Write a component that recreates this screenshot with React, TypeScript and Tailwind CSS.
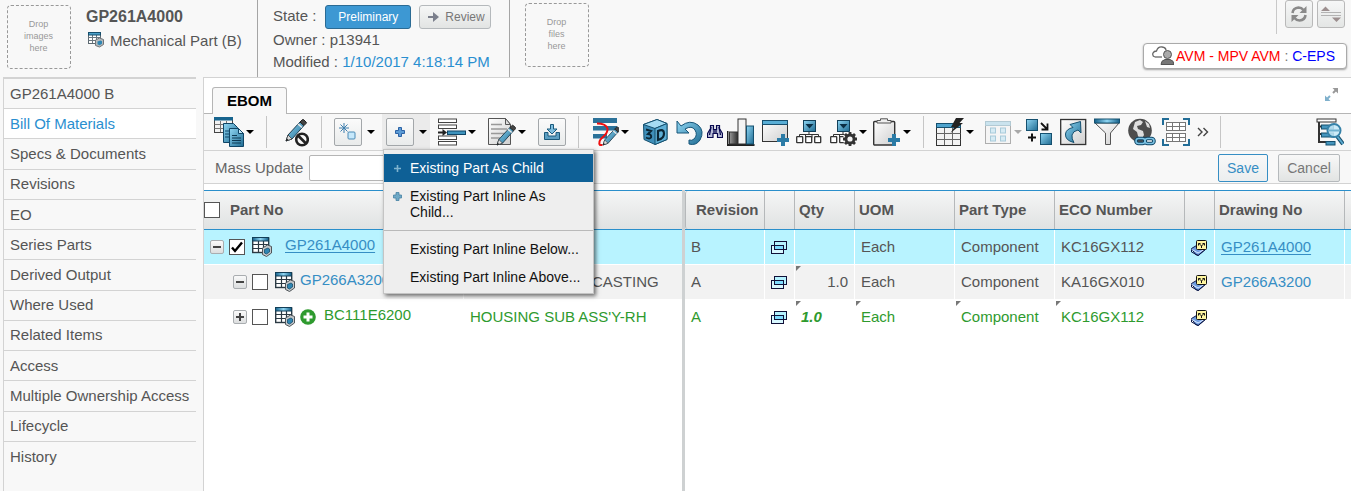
import React from 'react';
import type { ReactNode } from 'react';

const NAV = [
  'GP261A4000 B',
  'Bill Of Materials',
  'Specs & Documents',
  'Revisions',
  'EO',
  'Series Parts',
  'Derived Output',
  'Where Used',
  'Related Items',
  'Access',
  'Multiple Ownership Access',
  'Lifecycle',
  'History',
];

function Defs() {
  return (
    <svg className="absolute h-0 w-0" aria-hidden="true">
      <defs>
        <linearGradient id="blue" x1="0" y1="0" x2="1" y2="1">
          <stop offset="0" stopColor="#8fd6f3" />
          <stop offset="1" stopColor="#1f6b92" />
        </linearGradient>
        <linearGradient id="blueH" x1="0" y1="0" x2="1" y2="0">
          <stop offset="0" stopColor="#15608a" />
          <stop offset="0.5" stopColor="#8fd6f3" />
          <stop offset="1" stopColor="#15608a" />
        </linearGradient>
        <linearGradient id="paper" x1="0" y1="0" x2="1" y2="1">
          <stop offset="0" stopColor="#ffffff" />
          <stop offset="1" stopColor="#cfcfcf" />
        </linearGradient>
        <linearGradient id="dark" x1="0" y1="0" x2="1" y2="0">
          <stop offset="0" stopColor="#999999" />
          <stop offset="1" stopColor="#333333" />
        </linearGradient>
      </defs>
    </svg>
  );
}

function Art({ size = 28, children }: { size?: number; children: ReactNode }) {
  return (
    <svg width={size} height={size} viewBox={`0 0 ${size} ${size}`} fill="none" className="shrink-0" aria-hidden="true">
      {children}
    </svg>
  );
}

function Caret({ muted = false }: { muted?: boolean }) {
  return (
    <svg width="8" height="4" viewBox="0 0 8 4" className="shrink-0" aria-hidden="true">
      <path d="M0 0h8L4 4z" fill={muted ? '#a8a8a8' : '#000'} />
    </svg>
  );
}

function Tool({ label, menu, muted, children }: { label: string; menu?: boolean; muted?: boolean; children: ReactNode }) {
  return (
    <button type="button" aria-label={label} className="flex shrink-0 items-center">
      {children}
      {menu && (
        <span className="flex w-[10px] justify-end">
          <Caret muted={muted} />
        </span>
      )}
    </button>
  );
}

function Boxed({ children }: { children: ReactNode }) {
  return (
    <span className="flex size-7 shrink-0 items-center justify-center rounded-[2px] border border-[#a3a7aa] bg-linear-to-b from-[#fbfbfb] to-[#e9ebeb]">
      {children}
    </span>
  );
}

function Separator() {
  return <span className="mx-3 h-8 w-px shrink-0 bg-[#c6c6c6]" />;
}

function Tree() {
  return (
    <>
      <path d="M14 13.500v3M4.500 19.500v-3h19v3M10.500 19.500v-3M17 19.500v-3" stroke="#333" />
      <rect x="8.500" y="2.500" width="12" height="11" fill="url(#blue)" stroke="#123f58" />
      <path d="M10.500 6h8l-4 4.500z" fill="#0b2f45" />
      <rect x="1.700" y="18.700" width="6" height="6" rx="0.500" fill="#fff" stroke="#333" strokeWidth="1.300" />
      <rect x="10.700" y="18.700" width="6" height="6" rx="0.500" fill="#fff" stroke="#333" strokeWidth="1.300" />
      <rect x="19.700" y="18.700" width="6" height="6" rx="0.500" fill="#fff" stroke="#333" strokeWidth="1.300" />
    </>
  );
}

function Pencil() {
  return (
    <>
      <path d="M0 0l2-6L14-19l4 3.500L6-2z" fill="url(#blue)" stroke="#1f3c4d" />
      <path d="M14-19l2-2q1-1 2 0l2 2q1 1 0 1.500l-2 2z" fill="#444" stroke="#222" />
      <path d="M12-17l4 3.500" stroke="#e8e8e8" strokeWidth="1.500" />
      <path d="M0 0l2-6 4 4z" fill="#ddd" stroke="#333" strokeWidth="0.700" />
      <path d="M0 0l.8-2.500 1.600 1.600z" fill="#111" />
    </>
  );
}

function ExistingPartMenu() {
  return (
    <div
      role="menu"
      className="absolute top-[35px] left-px z-10 w-[211px] border border-[#c4c4c4] bg-[#eee] pt-1 pb-0.5 text-[14px] leading-4 text-[#111] shadow-[2px_2px_4px_rgba(0,0,0,0.55)]"
    >
      <button type="button" role="menuitem" className="flex w-full items-start bg-[#0e6096] py-1.5 text-left text-white">
        <span className="flex h-4 w-[26px] shrink-0 items-center justify-center">
          <svg width="9" height="9" viewBox="0 0 9 9" aria-hidden="true">
            <path d="M4.500 1v7M1 4.500h7" stroke="#7fb3cf" strokeWidth="1.600" />
          </svg>
        </span>
        Existing Part As Child
      </button>
      <button type="button" role="menuitem" className="flex w-full items-start py-1.5 pr-7 text-left">
        <span className="flex h-4 w-[26px] shrink-0 items-center justify-center">
          <svg width="9" height="9" viewBox="0 0 9 9" aria-hidden="true">
            <path d="M3 .5h3V3h2.500v3H6v2.500H3V6H.5V3H3z" fill="#6fa9c6" stroke="#4682a3" strokeWidth="0.800" />
          </svg>
        </span>
        Existing Part Inline As Child...
      </button>
      <div className="my-1 h-px bg-[#b9b9b9]" />
      <button type="button" role="menuitem" className="block w-full py-1.5 pl-[26px] text-left whitespace-nowrap">
        Existing Part Inline Below...
      </button>
      <button type="button" role="menuitem" className="block w-full py-1.5 pl-[26px] text-left whitespace-nowrap">
        Existing Part Inline Above...
      </button>
    </div>
  );
}

function Toolbar() {
  return (
    <div className="flex h-[37px] items-center border-b border-[#d3d3d3] bg-[#f8f8f8] pl-[10px]">
      <Tool label="Part lists" menu>
        <Art size={30}>
          <rect x=".5" y="1" width="18" height="14.500" fill="#f2f2f2" stroke="#444" />
          <path d="M.5 7.500h18M.5 11.500h18M6.500 4v11M12.500 4v11" stroke="#777" />
          <rect x="0" y="0" width="19" height="3.500" fill="#17648e" />
          <path d="M9.500 6.500h10l4 4v15h-14z" fill="url(#blue)" stroke="#0f4566" />
          <path d="M11 14h4M11 17h4M11 20h4" stroke="#0f4566" />
          <path d="M15.500 11.500h9l5 5v13h-14z" fill="url(#blue)" stroke="#0f4566" />
          <path d="M24.500 11.500v5h5z" fill="#bfe6f7" stroke="#0f4566" />
          <path d="M18 18.500h5M18 21h9M18 23.500h9M18 26h9" stroke="#0d3a55" />
        </Art>
      </Tool>
      <Separator />
      <Tool label="Disable editing">
        <Art size={30}>
          <g transform="translate(7 24)">
            <Pencil />
          </g>
          <circle cx="23" cy="22.500" r="5.800" fill="#f8f8f8" stroke="#222" strokeWidth="2.600" />
          <path d="M19 18.500l8 8" stroke="#222" strokeWidth="2.600" />
        </Art>
      </Tool>
      <Separator />
      <button type="button" aria-label="Create new part" className="flex w-12 shrink-0 items-center gap-[5px]">
        <Boxed>
          <Art size={18}>
            <path d="M5 0v10M0 5h10M1.500 1.500l7 7M8.500 1.500l-7 7" stroke="#3f7fae" />
            <rect x="9" y="9" width="7" height="7" rx="1" fill="#c6e8fb" stroke="#4b8ab5" />
          </Art>
        </Boxed>
        <Caret />
      </button>
      <div className="relative h-9 w-12 shrink-0 bg-[#ebebeb]">
        <button type="button" aria-label="Add existing" aria-expanded="true" className="flex h-9 items-center gap-[5px] pl-1">
          <Boxed>
            <Art size={10}>
              <path d="M3.500.5h3v3h3v3h-3v3h-3v-3h-3v-3h3z" fill="#5b9bd5" stroke="#2d62a5" />
            </Art>
          </Boxed>
          <Caret />
        </button>
        <ExistingPartMenu />
      </div>
      <div className="ml-2 flex items-center gap-3">
        <Tool label="Insert row" menu>
          <Art>
            <g fill="#fff" stroke="#444">
              <rect x=".5" y="1" width="18" height="3.500" />
              <rect x=".5" y="7" width="18" height="3.500" />
              <rect x=".5" y="18" width="18" height="3.500" />
              <rect x=".5" y="23.500" width="18" height="3.500" />
            </g>
            <path d="M0 14.500h6" stroke="#222" strokeWidth="2" />
            <path d="M4.500 11l4.500 3.500-4.500 3.500z" fill="#222" />
            <rect x="9.500" y="13" width="18" height="3.500" fill="#3e93bd" stroke="#0f4566" />
          </Art>
        </Tool>
        <Tool label="Edit document" menu>
          <Art>
            <path d="M.5.500h17l5 6v20H.500z" fill="url(#paper)" stroke="#555" />
            <path d="M17.500.5v6h5z" fill="#ddd" stroke="#555" />
            <path d="M3 6.500h11M3 11h16M3 15.500h14M3 20h9" stroke="#999" strokeWidth="1.600" />
            <g transform="translate(9 27) scale(.92)">
              <Pencil />
            </g>
          </Art>
        </Tool>
        <button type="button" aria-label="Import">
          <Boxed>
            <Art size={18}>
              <path d="M1.500 9.500h3.500V13h8V9.500h3.500v7h-15z" fill="#5c9fc2" stroke="#1b5a7c" />
              <path d="M7.500 1.500h3V6H14l-5 5-5-5h3.500z" fill="#7fbfe0" stroke="#1b5a7c" />
            </Art>
          </Boxed>
        </button>
      </div>
      <Separator />
      <Tool label="Markup" menu>
        <Art>
          <g fill="#2c7299">
            <rect x="2" y="0" width="24" height="5" />
            <rect x="2" y="8" width="24" height="4.500" />
            <rect x="2" y="16" width="14" height="4.500" />
          </g>
          <path d="M6 5.500q9 0 10.500 5 .5 4-4 8t-4 6q-1 3 3 2.500" stroke="#f01010" strokeWidth="2" />
          <g transform="translate(12 27) scale(.84)">
            <Pencil />
          </g>
        </Art>
      </Tool>
      <div className="ml-3 flex items-center gap-1.5">
        <Tool label="3D view">
          <Art>
            <path d="M2.500 6.500L16 1.500l10 4v16L14 26.500 3 21.500z" fill="#3f8fb9" stroke="#15506f" />
            <path d="M2.500 6.500L16 1.500l10 4-12 5z" fill="#a5dcf3" stroke="#15506f" />
            <path d="M14 10.500l12-5v16l-12 5z" fill="#5fb0d6" stroke="#15506f" />
            <path d="M5 11.500l5 1.500-3 3q4 .5 3 3.500-1.500 2-5 0" stroke="#0b2635" strokeWidth="2" />
            <path d="M17 13v9q6-1.500 6-6.500T17 13z" stroke="#0b2635" strokeWidth="2.200" />
          </Art>
        </Tool>
        <Tool label="Undo">
          <Art>
            <path d="M2 3v12h12l-4-4q7-4 10 1t-1 9q-2 2-5 1v4q7 2 11-4 5-9-2-15-8-6-17 1z" fill="url(#blue)" stroke="#175578" strokeLinejoin="round" />
          </Art>
        </Tool>
        <button type="button" aria-label="Find" className="flex w-3 shrink-0 justify-center">
          <Art size={16}>
            <path d="M3.500 1.500h3v4h3v-4h3v3l3 5v4h-5v-4h-4.500v4h-5.500v-4l3-5z" fill="#b9bdd8" stroke="#0a0a50" strokeWidth="1.200" />
            <path d="M4 3l-1.500 8M7 5v5M9 5v5M12 3l1.500 8" stroke="#0a0a50" strokeWidth="1.300" />
          </Art>
        </button>
        <Tool label="Chart">
          <Art>
            <path d="M.5 13v14h27" stroke="#222" strokeWidth="2" />
            <rect x="2.500" y="14" width="8" height="12" fill="url(#dark)" stroke="#333" />
            <rect x="11" y="1" width="8" height="25" fill="#f4f4f4" stroke="#333" />
            <rect x="19.500" y="8" width="7" height="18" fill="url(#blue)" stroke="#15506f" />
          </Art>
        </Tool>
        <Tool label="Add window">
          <Art>
            <rect x="1.500" y="2.500" width="25" height="21" fill="url(#paper)" stroke="#333" />
            <rect x="1.500" y="2.500" width="25" height="4" fill="#59aed6" stroke="#174e6c" />
            <path d="M20 16h4v4h4v4h-4v4h-4v-4h-4v-4h4z" fill="#2b7ba6" />
          </Art>
        </Tool>
        <Tool label="Structure">
          <Art>
            <Tree />
          </Art>
        </Tool>
        <Tool label="Structure settings" menu>
          <Art>
            <Tree />
            <circle cx="21" cy="21" r="7.200" fill="#f8f8f8" />
            <circle cx="21" cy="21" r="5.500" fill="#333" />
            <path d="M21 14v14M14 21h14M16 16l10 10M26 16L16 26" stroke="#333" strokeWidth="2.800" />
            <circle cx="21" cy="21" r="2.600" fill="#f4f4f4" />
          </Art>
        </Tool>
        <Tool label="Paste" menu>
          <Art>
            <rect x=".7" y="3.500" width="21" height="23.500" rx="1" fill="url(#paper)" stroke="#333" strokeWidth="1.400" />
            <path d="M4 5V2.500h3.500V.8h7v1.700H18V5z" fill="#eee" stroke="#555" />
            <path d="M19 16h4v4h4v4h-4v4h-4v-4h-4v-4h4z" fill="#2b7ba6" />
          </Art>
        </Tool>
      </div>
      <Separator />
      <div className="flex items-center gap-[10px]">
        <Tool label="Table actions" menu>
          <Art>
            <rect x=".5" y="6.500" width="24" height="21" fill="#f3f3f3" stroke="#333" />
            <path d="M.5 15.500h24M.5 21.500h24M8.500 10v17M16.500 10v17" stroke="#666" />
            <rect x=".5" y="5.500" width="24" height="4" fill="#4ea3cd" stroke="#15506f" />
            <path d="M20 0h8l-4.500 5H27L14.500 15l4-6H15z" fill="#222" />
          </Art>
        </Tool>
        <Tool label="Views" menu muted>
          <Art>
            <g opacity="0.500">
              <rect x="1.500" y="3.500" width="25" height="22" fill="#f3f3f3" stroke="#666" />
              <rect x="1.500" y="3.500" width="25" height="4" fill="#9dd0e6" stroke="#6f9db1" />
              <g fill="#b5dff1" stroke="#5b9ebc">
                <rect x="6.500" y="10" width="5" height="5" />
                <rect x="16.500" y="10" width="5" height="5" />
                <rect x="6.500" y="18" width="5" height="5" />
                <rect x="16.500" y="18" width="5" height="5" />
              </g>
            </g>
          </Art>
        </Tool>
      </div>
      <div className="ml-1 flex items-center gap-1.5">
        <Tool label="Replace">
          <Art>
            <rect x=".5" y="1.500" width="11" height="11" fill="url(#blue)" stroke="#15506f" />
            <rect x="14.500" y="15.500" width="11" height="11" fill="url(#blue)" stroke="#15506f" />
            <path d="M15 5l6 6M21.500 5.500v6h-6" stroke="#111" strokeWidth="1.800" />
            <path d="M6 15.500v8M2 19.500h8" stroke="#111" strokeWidth="2" />
          </Art>
        </Tool>
        <Tool label="Open link">
          <Art>
            <rect x=".7" y="1.500" width="25" height="25" fill="url(#paper)" stroke="#333" strokeWidth="1.300" />
            <path d="M14 24.500q-9-2-8.500-8.500.5-5 7.500-6.500L10 6.500 20.500 3.500 21 15l-3-3q-5 1-6 5-.5 4 2 7.500z" fill="url(#blue)" stroke="#15506f" />
          </Art>
        </Tool>
        <Tool label="Filter">
          <Art>
            <path d="M1 5h24L16.500 15v11.500h-5V15z" fill="url(#paper)" stroke="#555" />
            <rect x=".5" y="1" width="25" height="4" fill="url(#blueH)" stroke="#15506f" />
          </Art>
        </Tool>
        <Tool label="Web link">
          <Art>
            <circle cx="12" cy="12.500" r="11.800" fill="#4d4d4d" />
            <path d="M7 4l5-2 3 2-2 3-4 1 1 3 5 2 1 4-3 5-3-4-1-4-4-3zM17 3l4 3 1 4-3-1z" fill="#ddd" />
            <g stroke="#0f4566" strokeWidth="3.600">
              <rect x="8" y="20.500" width="9" height="5" rx="2.500" />
              <rect x="17" y="20.500" width="9" height="5" rx="2.500" />
            </g>
            <g stroke="#7cc3e4" strokeWidth="1.500">
              <rect x="8" y="20.500" width="9" height="5" rx="2.500" />
              <rect x="17" y="20.500" width="9" height="5" rx="2.500" />
            </g>
          </Art>
        </Tool>
        <Tool label="Fit table">
          <Art>
            <path d="M1 7V1h6M21 1h6v6M27 21v6h-6M7 27H1v-6" stroke="#226d97" strokeWidth="2" />
            <g fill="#fff" stroke="#777">
              <rect x="4.500" y="4.500" width="19" height="8" />
              <rect x="4.500" y="15.500" width="19" height="8" />
              <path d="M4.500 8.500h19M4.500 19.500h19M10.500 4.500v8M17.500 4.500v8M10.500 15.500v8M17.500 15.500v8" />
            </g>
          </Art>
        </Tool>
        <Tool label="More tools">
          <svg width="14" height="12" viewBox="0 0 14 12" fill="none" aria-hidden="true">
            <path d="M2 2l4 4-4 4M7.500 2l4 4-4 4" stroke="#444" strokeWidth="1.400" />
          </svg>
        </Tool>
      </div>
      <span className="ml-[10px] h-8 w-px shrink-0 bg-[#c6c6c6]" />
      <div className="mr-[7px] ml-auto">
        <Tool label="Search in structure">
          <Art>
            <path d="M3 4v20h7M3 8.500h4M3 16h4" stroke="#333" strokeWidth="2" />
            <rect x="1" y="1" width="19" height="3" fill="#fff" stroke="#333" />
            <rect x="5.500" y="7" width="12" height="4" fill="#4595bd" stroke="#15506f" />
            <rect x="5.500" y="15" width="12" height="4" fill="#4595bd" stroke="#15506f" />
            <rect x="10" y="23.500" width="9" height="3.500" fill="#4595bd" stroke="#15506f" />
            <path d="M21 18l6 8" stroke="#174e6c" strokeWidth="4" />
            <path d="M21 18l6 8" stroke="#5aa9ce" strokeWidth="2" />
            <circle cx="18" cy="12.500" r="6.500" fill="#c5e9f8" fillOpacity="0.850" stroke="#3682a9" strokeWidth="2" />
            <path d="M13 12.500h10" stroke="#6fb0cf" strokeWidth="2" />
          </Art>
        </Tool>
      </div>
    </div>
  );
}

function PartIcon() {
  return (
    <Art size={20}>
      <rect x=".7" y="1" width="16" height="14.500" fill="#fff" stroke="#2c3a44" strokeWidth="1.400" />
      <path d="M.5 7.500h16M.5 11.500h16M6.500 4v11.500M11.500 4v11.500" stroke="#2c3a44" strokeWidth="1.200" />
      <rect x=".5" y=".5" width="16" height="3.500" fill="url(#blueH)" stroke="#123f58" />
      <path d="M10.500 11l5-3 4 1.500v6.500l-5 3.500-4-2z" fill="#c4c8cb" stroke="#4f5559" />
      <path d="M12.500 12.500l3.500-1.500 1.500 1v3l-3 2-2-1z" fill="#2f86b3" stroke="#174e6c" strokeWidth="0.800" />
    </Art>
  );
}

function WindowsIcon() {
  return (
    <Art size={16}>
      <rect x="3.500" y="1.500" width="12" height="8" fill="#b5f2ff" stroke="#101038" />
      <rect x=".5" y="5.500" width="12" height="8" fill="#d8f8ff" stroke="#101038" />
      <rect x="3.500" y="5.500" width="9" height="4" fill="#7fdcff" stroke="#101038" />
    </Art>
  );
}

function ChangeIcon() {
  return (
    <Art size={16}>
      <path d="M.5 8.500l5-3 9 3.500-7 6.500-3-1z" fill="#6f9de0" stroke="#0e1a4a" />
      <path d="M1 9.500l6 3.500 7-4" stroke="#d8e6ff" />
      <path d="M.5 9.500v2.500l6.500 3.500 7.500-6" stroke="#0e1a4a" />
      <rect x="5.500" y=".5" width="10" height="9" rx="1" fill="#fff6a0" stroke="#111" />
      <path d="M10.500 8V6L8 3.500M10.500 6L13 3.500M7.500 5.500v-2h2M11.500 3.500h2v2" stroke="#111" />
    </Art>
  );
}

function Check({ label, checked = false }: { label: string; checked?: boolean }) {
  return (
    <label className="grid size-4 shrink-0">
      <input
        type="checkbox"
        aria-label={label}
        defaultChecked={checked}
        className="peer col-start-1 row-start-1 size-4 appearance-none border border-[#555] bg-white"
      />
      <svg viewBox="0 0 16 16" className="pointer-events-none invisible col-start-1 row-start-1 size-4 peer-checked:visible" aria-hidden="true">
        <path d="M3 8.500l3 3.500 7-8.500" fill="none" stroke="#000" strokeWidth="2.400" />
      </svg>
    </label>
  );
}

function Expander({ open }: { open: boolean }) {
  return (
    <button
      type="button"
      aria-label={open ? 'Collapse' : 'Expand'}
      className="flex size-[14px] shrink-0 items-center justify-center rounded-[2px] border border-[#a9adb0] bg-linear-to-b from-[#fafafa] to-[#dcdedf]"
    >
      <svg width="8" height="8" viewBox="0 0 8 8" aria-hidden="true">
        <path d={open ? 'M0 4h8' : 'M0 4h8M4 0v8'} stroke="#444" strokeWidth="2" />
      </svg>
    </button>
  );
}

type Row = {
  part: string;
  name: ReactNode;
  namePad?: string;
  rev: string;
  qty: string;
  eco: string;
  drawing: string;
  flags: boolean[];
  open: boolean;
  checked?: boolean;
  added?: boolean;
  root?: boolean;
  bg: string;
};

const ROWS: Row[] = [
  { part: 'GP261A4000', name: '', rev: 'B', qty: '', eco: 'KC16GX112', drawing: 'GP261A4000', flags: [false, false, false, false], open: true, checked: true, root: true, bg: 'bg-[#b8f3ff]' },
  { part: 'GP266A3200', name: 'CASTING', namePad: 'pl-32', rev: 'A', qty: '1.0', eco: 'KA16GX010', drawing: 'GP266A3200', flags: [true, false, false, false], open: true, bg: 'bg-[#f2f2f2]' },
  { part: 'BC111E6200', name: "HOUSING SUB ASS'Y-RH", rev: 'A', qty: '1.0', eco: 'KC16GX112', drawing: '', flags: [true, true, true, true], open: false, added: true, bg: 'bg-white' },
];

const TH = 'h-10 border-y border-[#2a8fcb] bg-linear-to-b from-[#f5f6f6] to-[#e0e2e2] p-0 text-left font-bold whitespace-nowrap';
const TD = 'relative h-[35px] border-r border-b border-white p-0 pl-1.5 whitespace-nowrap';

function HeadCell({ children, pad = 'pl-1' }: { children?: ReactNode; pad?: string }) {
  return (
    <th scope="col" className={TH}>
      <div className={`flex h-[38px] items-center border-r border-[#b5b8ba] ${pad}`}>{children}</div>
    </th>
  );
}

function Flag({ on }: { on: boolean }) {
  return on ? (
    <svg width="5" height="5" viewBox="0 0 5 5" className="absolute top-px left-px" aria-hidden="true">
      <path d="M0 0h5L0 5z" fill="#777" />
    </svg>
  ) : null;
}

function Grid() {
  return (
    <div className="mt-1.5 flex flex-1 text-[15px] leading-[18px]">
      <div className="w-[478px] shrink-0">
        <table className="w-full table-fixed border-separate border-spacing-0">
          <colgroup>
            <col className="w-[260px]" />
            <col />
          </colgroup>
          <thead>
            <tr>
              <th scope="col" className={TH}>
                <div className="flex items-center gap-[10px]">
                  <Check label="Select all" />
                  Part No
                </div>
              </th>
              <th scope="col" aria-label="Name" className={TH} />
            </tr>
          </thead>
          <tbody>
            {ROWS.map((r) => (
              <tr key={r.part} className={`${r.bg} ${r.added ? 'text-[#2e9a2e]' : ''}`}>
                <td className="h-[35px] border-r border-b border-white p-0">
                  <div className={`flex items-center ${r.root ? 'pl-1.5' : 'pl-[29px]'}`}>
                    <Expander open={r.open} />
                    <span className="ml-[5px] flex items-center gap-[7px]">
                      <Check label={`Select ${r.part}`} checked={r.checked} />
                      <PartIcon />
                    </span>
                    {r.added && (
                      <svg width="16" height="16" viewBox="0 0 16 16" className="ml-[5px] shrink-0" aria-hidden="true">
                        <circle cx="8" cy="8" r="7.800" fill="#2e9a2e" />
                        <path d="M8 3.500v9M3.500 8h9" stroke="#fff" strokeWidth="3" />
                      </svg>
                    )}
                    <a
                      href={`#${r.part}`}
                      className={`pb-1 ${
                        r.root
                          ? 'ml-[13px] text-[#368ec4] underline underline-offset-2'
                          : r.added
                            ? 'ml-2'
                            : 'ml-[5px] text-[#368ec4]'
                      }`}
                    >
                      {r.part}
                    </a>
                  </div>
                </td>
                <td className={`h-[35px] border-b border-white p-0 ${r.namePad ?? 'pl-1.5'}`}>{r.name}</td>
              </tr>
            ))}
          </tbody>
        </table>
      </div>
      <div className="w-[3px] shrink-0 bg-[#ced1d2]" />
      <div className="min-w-0 flex-1">
        <table className="w-full table-fixed border-separate border-spacing-0">
          <colgroup>
            <col className="w-20" />
            <col className="w-[30px]" />
            <col className="w-[60px]" />
            <col className="w-[100px]" />
            <col className="w-[100px]" />
            <col className="w-[130px]" />
            <col className="w-[30px]" />
            <col className="w-[130px]" />
            <col />
          </colgroup>
          <thead>
            <tr>
              <HeadCell pad="rounded-l-[3px] border-l pl-[10px]">Revision</HeadCell>
              <HeadCell />
              <HeadCell>Qty</HeadCell>
              <HeadCell>UOM</HeadCell>
              <HeadCell>Part Type</HeadCell>
              <HeadCell>ECO Number</HeadCell>
              <HeadCell />
              <HeadCell>Drawing No</HeadCell>
              <th className={TH} />
            </tr>
          </thead>
          <tbody>
            {ROWS.map((r) => (
              <tr key={r.part} className={`${r.bg} ${r.added ? 'text-[#2e9a2e]' : ''}`}>
                <td className={TD}>{r.rev}</td>
                <td className={TD}>
                  <div className="pt-0.5">
                    <WindowsIcon />
                  </div>
                </td>
                <td className={`${TD} ${r.added ? 'font-bold italic' : 'pr-1.5 text-right'}`}>
                  <Flag on={r.flags[0]} />
                  {r.qty}
                </td>
                <td className={TD}>
                  <Flag on={r.flags[1]} />
                  Each
                </td>
                <td className={TD}>
                  <Flag on={r.flags[2]} />
                  Component
                </td>
                <td className={TD}>
                  <Flag on={r.flags[3]} />
                  {r.eco}
                </td>
                <td className={TD}>
                  <div className="pt-0.5">
                    <ChangeIcon />
                  </div>
                </td>
                <td className={TD}>
                  {r.drawing && (
                    <a href={`#${r.drawing}`} className={`text-[#368ec4] ${r.root ? 'underline underline-offset-2' : ''}`}>
                      {r.drawing}
                    </a>
                  )}
                </td>
                <td className="h-[35px] border-b border-white p-0" />
              </tr>
            ))}
          </tbody>
        </table>
      </div>
    </div>
  );
}

function DropBox({ what }: { what: string }) {
  return (
    <div className="flex size-16 shrink-0 flex-col items-center justify-center rounded-[4px] border border-dashed border-[#999] pr-px pb-0.5 text-[9px] leading-3 text-[#999]">
      <span>Drop</span>
      <span>{what}</span>
      <span>here</span>
    </div>
  );
}

function Header() {
  return (
    <header className="flex h-[77px] pl-[7px]">
      <div className="flex w-[251px] shrink-0 gap-[15px] border-r border-[#a5a5a5] pt-[5px]">
        <DropBox what="images" />
        <div className="whitespace-nowrap">
          <h1 className="pt-[3px] text-[16px] leading-[18px] font-bold">GP261A4000</h1>
          <div className="mt-1.5 flex gap-1.5 pl-0.5 text-[15px] leading-[18px]">
            <Art size={16}>
              <rect x=".5" y=".5" width="12" height="11" fill="#fff" stroke="#5c6870" />
              <path d="M.5 5.500h12M.5 8.500h12M4.500 3v8M8.500 3v8" stroke="#6b7780" />
              <rect x=".5" y=".5" width="12" height="2.500" fill="#4ba0c9" stroke="#174e6c" />
              <path d="M7.500 8l4-2 4 1.500v5l-4 2.500-4-1.500z" fill="#b5babd" stroke="#707579" />
              <path d="M9.500 9.500l3-1 1.500.8v2.500l-2.500 1.500-2-1z" fill="#2f86b3" />
            </Art>
            Mechanical Part (B)
          </div>
        </div>
      </div>
      <div className="w-[252px] shrink-0 border-r border-[#a5a5a5] pt-[5px] pl-[15px] text-[15px] leading-[22px] whitespace-nowrap">
        <div className="flex">
          <span className="mr-[9px]">State :</span>
          <button type="button" className="mr-2 h-6 w-[86px] rounded-[3px] border border-[#2b6b94] bg-[#3d98d3] text-[12px] leading-4 text-white">
            Preliminary
          </button>
          <button
            type="button"
            className="flex h-6 w-[72px] items-center gap-1.5 rounded-[3px] border border-[#b5b9bc] bg-linear-to-b from-[#f6f7f7] to-[#e2e4e3] pl-2 text-[12px] leading-4 text-[#777]"
          >
            <svg width="11" height="10" viewBox="0 0 11 10" aria-hidden="true">
              <path d="M0 5h6" stroke="#7b7f8c" strokeWidth="2" />
              <path d="M5 0l6 5-6 5z" fill="#7b7f8c" />
            </svg>
            Review
          </button>
        </div>
        <div>Owner : p13941</div>
        <div>
          Modified : <span className="text-[#2a8fd0]">1/10/2017 4:18:14 PM</span>
        </div>
      </div>
      <div className="pt-[3px] pl-[15px]">
        <DropBox what="files" />
      </div>
      <div className="ml-auto flex flex-col items-end pr-1">
        <div className="flex h-[34px] gap-1 border-l border-[#c9c9c9] pr-0.5 pl-2">
          <button type="button" aria-label="Refresh" className="flex size-7 items-center justify-center rounded-[3px] border border-[#b9b9b9] bg-linear-to-b from-[#f6f7f7] to-[#e4e6e5]">
            <Art size={18}>
              <path d="M2.500 8q.5-5 6-5.500 3 0 5 2.500M15.500 10q-.5 5-6 5.500-3 0-5-2.500" stroke="#8a8a8a" strokeWidth="2.600" />
              <path d="M16.500 1v7h-7zM1.500 17v-7h7z" fill="#8a8a8a" />
            </Art>
          </button>
          <button type="button" aria-label="Collapse header" className="flex size-7 items-center justify-center rounded-[3px] border border-[#b9b9b9] bg-linear-to-b from-[#f6f7f7] to-[#e4e6e5]">
            <Art size={22}>
              <path d="M1 9.500h20M1 12.500h20" stroke="#b3b3b3" />
              <path d="M1 8l4.500-4.500L10 8zM12 14.500h9l-4.500 4.500z" fill="#9c8f8f" />
            </Art>
          </button>
        </div>
        <div className="mt-[9px] flex h-[26px] items-center gap-0.5 rounded-[4px] border border-[#aaa] bg-white pr-[11px] pl-2 text-[14px] leading-4 whitespace-nowrap shadow-[0_1px_2px_rgba(0,0,0,0.35)]">
          <Art size={22}>
            <path d="M3 12q-3-1-2-4 1-2 3.500-2Q6 1.500 10 2t4 3.500" fill="#fff" stroke="#666" strokeWidth="1.300" />
            <path d="M3 12h7" stroke="#666" strokeWidth="1.300" />
            <circle cx="15.500" cy="9.500" r="4" fill="#aaa" stroke="#555" />
            <path d="M9 19.500q0-4 4-5h5q4 1 4 5z" fill="#777" stroke="#555" />
          </Art>
          <span className="text-[#777]">
            <span className="text-[#f00]">AVM - MPV AVM</span> : <span className="text-[#00f]">C-EPS</span>
          </span>
        </div>
      </div>
    </header>
  );
}

export default function App() {
  return (
    <div className="flex min-h-screen flex-col overflow-hidden bg-[#f8f8f8] font-['Liberation_Sans',Arial,sans-serif] text-[#555]">
      <Defs />
      <Header />
      <div className="flex flex-1">
        <nav className="ml-[3px] w-[193px] shrink-0 border-t-2 border-l border-[#d3d3d3] text-[15px] leading-[18px]">
          <ul className="grid min-h-[393px] auto-rows-fr">
            {NAV.map((item, i) => (
              <li key={item} className={`border-[#d3d3d3] ${i < NAV.length - 1 ? 'border-b' : ''}`}>
                <a
                  href="#"
                  aria-current={i === 1 ? 'page' : undefined}
                  className={`flex h-full items-center pl-1.5 whitespace-nowrap ${i === 1 ? 'bg-white text-[#2a8fd0]' : ''}`}
                >
                  {item}
                </a>
              </li>
            ))}
          </ul>
        </nav>
        <main className="ml-[7px] flex min-w-0 flex-1 flex-col border-t border-l border-[#d3d3d3] bg-white">
          <div role="tablist" className="flex items-end justify-between border-b border-[#b5b5b5] pt-[9px] pl-2">
            <button
              type="button"
              role="tab"
              aria-selected="true"
              className="-mb-px h-[27px] rounded-t-[3px] border border-b-0 border-[#b5b5b5] bg-[#f8f8f8] px-[14px] text-[15px] leading-[18px] font-bold text-black"
            >
              EBOM
            </button>
            <button type="button" aria-label="Maximize" className="mr-3 self-start">
              <Art size={15}>
                <path d="M8.500 1H14v5.500z" fill="#999" />
                <path d="M13 2L9 6" stroke="#999" strokeWidth="2" />
                <path d="M1 8.500V14h5.500z" fill="#7fb0cc" />
                <path d="M2 13l4-4" stroke="#7fb0cc" strokeWidth="2" />
              </Art>
            </button>
          </div>
          <Toolbar />
          <div className="flex h-[33px] items-center border-b border-[#d3d3d3] bg-[#f8f8f8] px-[11px] pt-px text-[15px] leading-[18px]">
            <label htmlFor="mass-update" className="mr-1.5 whitespace-nowrap text-[#666]">
              Mass Update
            </label>
            <input id="mass-update" type="text" className="h-[26px] w-40 rounded-[2px] border border-[#b5b5b5] bg-white px-2" />
            <button type="button" className="ml-auto h-7 w-[50px] rounded-[2px] border border-[#368ec4] bg-linear-to-b from-[#f8f8f8] to-[#ebeeef] text-[14px] leading-4 text-[#368ec4]">
              Save
            </button>
            <button type="button" className="ml-[10px] h-7 w-[62px] rounded-[2px] border border-[#b5b9bc] bg-linear-to-b from-[#f8f8f8] to-[#e2e4e3] text-[14px] leading-4 text-[#777]">
              Cancel
            </button>
          </div>
          <Grid />
        </main>
      </div>
    </div>
  );
}
